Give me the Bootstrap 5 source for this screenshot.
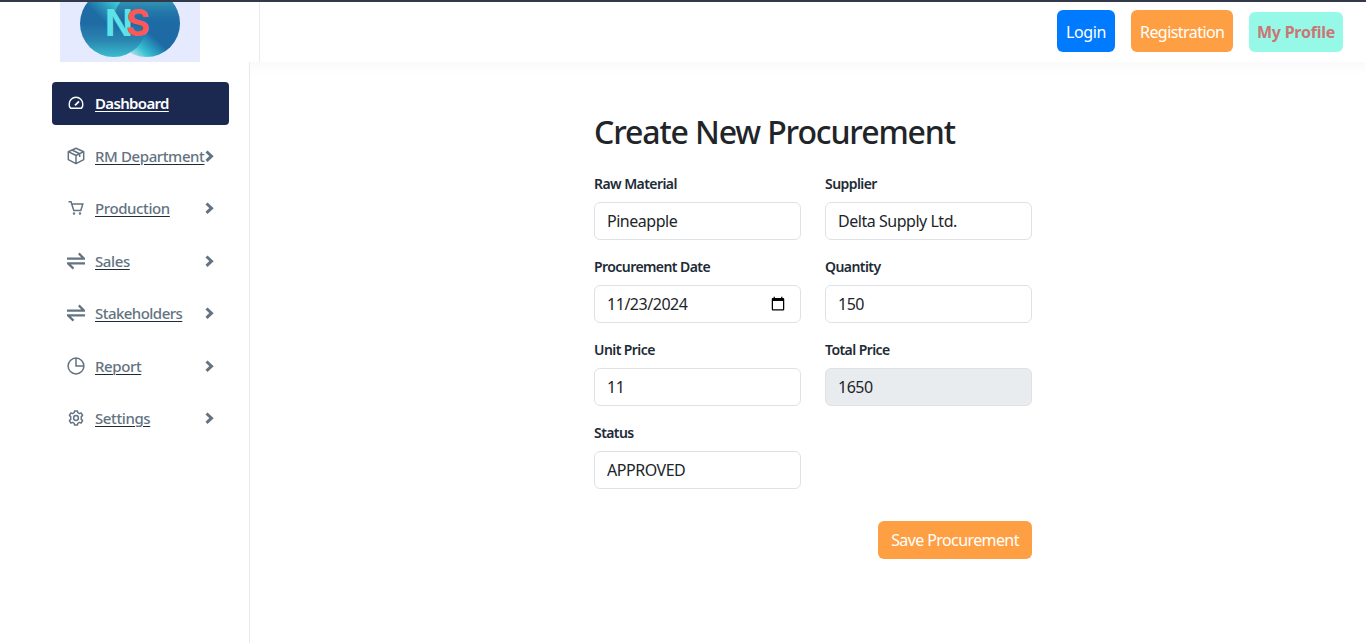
<!DOCTYPE html>
<html lang="en">
<head>
<meta charset="utf-8">
<meta name="viewport" content="width=device-width, initial-scale=1">
<title>Create New Procurement</title>
<link href="https://cdn.jsdelivr.net/npm/bootstrap@5.3.0/dist/css/bootstrap.min.css" rel="stylesheet">
<style>
  body { font-family: "Noto Sans", "Open Sans", sans-serif; color: #212529; height: 643px; overflow: hidden; background: #fff; }
  .topbar { height: 62px; border-top: 2px solid #323a49; box-shadow: 8px 4px 14px rgba(0,0,0,.03); background: #fff; }
  .brand { width: 260px; border-right: 1px solid #e9eaec; padding-left: 60px; }
  .brand svg { display: block; }
  .brand text { font: 700 36.5px Inter, sans-serif; }
  .top-actions { padding: 8px 23px 0 0; }
  .top-btn { height: 42px; padding: 10px 9px 8px; border-radius: 6px; color: #fff; line-height: 24px; font-size: 16px; text-decoration: none; white-space: nowrap; }
  .b-login { background: #007bff; width: 58px; letter-spacing: -.4px; }
  .b-reg { background: #ff9f43; width: 102px; letter-spacing: -.56px; }
  .b-prof { background: #96f9e8; color: #cb7575; width: 94px; height: 40px; margin-top: 2px; padding: 8px; font-weight: 700; letter-spacing: -.24px; }
  .side { width: 250px; height: 581px; border-right: 1px solid #e8e9eb; padding: 20px 20px 0 52px; background: #fff; }
  .side-item { height: 42.5px; margin-bottom: 10px; padding: 0 15px; border-radius: 4px; color: #637381; font-size: 15px; font-weight: 500; text-decoration: none; }
  .side-item span { text-decoration: underline; text-decoration-color: #212b36; text-decoration-thickness: 1px; text-underline-offset: 2px; margin-left: 10px; letter-spacing: -.4px; white-space: nowrap; }
  .side-item.current { background: #1b2850; color: #fff; }
  .side-item.current span { text-decoration-color: #fff; font-weight: 600; letter-spacing: -.66px; }
  .side-item .snug { letter-spacing: -.54px; }
  .side-item svg { flex: none; }
  .side-item .chev { margin: 0 -1px 0 auto; }
  .proc-form { width: 438px; margin-left: 344px; padding-top: 51px; }
  h2 { font-size: 32px; font-weight: 550; line-height: 38px; margin-bottom: 22px; letter-spacing: -1.12px; white-space: nowrap; }
  .form-label { display: block; font-size: 14px; line-height: 21px; font-weight: 600; margin-bottom: 8px; letter-spacing: -.57px; color: #212b36; }
  .form-control { height: 38px; letter-spacing: -.47px; color: #212529; border-color: #dee2e6; font-size: 16px; }
  .form-control[readonly] { background: #e9ecef; }
  .save { width: 154px; height: 38px; background: #ff9f43; color: #fff; padding: 6px 0; letter-spacing: -.6px; border: 0; }
</style>
<script src="https://cdn.jsdelivr.net/npm/bootstrap@5.3.0/dist/js/bootstrap.bundle.min.js"></script>
</head>
<body>
<svg width="0" height="0" class="position-absolute">
  <symbol id="chev" viewBox="0 0 10 14"><path d="M1.500 2.500 6.500 7.200 1.500 11.900" fill="none" stroke="#637381" stroke-width="3"/></symbol>
  <symbol id="swap" viewBox="0 0 18 18"><path d="M0 6.600h17L11.800 1.400M18 11.400H1l5.500 5.200" fill="none" stroke="#637381" stroke-width="2.200"/></symbol>
</svg>
<header class="topbar d-flex justify-content-between">
  <div class="brand">
    <svg width="140" height="60" viewBox="0 2 140 60">
      <defs>
        <linearGradient id="right" x1="66" y1="56" x2="104" y2="14" gradientUnits="userSpaceOnUse"><stop offset="0" stop-color="#e3eff0"/><stop offset=".28" stop-color="#36bfd2"/><stop offset=".58" stop-color="#1d6aa5"/><stop offset="1" stop-color="#1d6aa5"/></linearGradient>
        <linearGradient id="left" x1="0" y1="2" x2="0" y2="57" gradientUnits="userSpaceOnUse"><stop offset=".4" stop-color="#1f6ca5"/><stop offset=".7" stop-color="#2a86b0"/><stop offset="1" stop-color="#3bbccf"/></linearGradient>
        <linearGradient id="glow" x1="36" y1="14" x2="52" y2="-2" gradientUnits="userSpaceOnUse"><stop offset="0" stop-color="#36bfd2" stop-opacity="0"/><stop offset="1" stop-color="#3fc6d3"/></linearGradient>
        <linearGradient id="haze" x1="0" y1="2" x2="0" y2="24" gradientUnits="userSpaceOnUse"><stop offset="0" stop-color="#3192b3"/><stop offset="1" stop-color="#2272a6" stop-opacity="0"/></linearGradient>
        <mask id="outside" maskUnits="userSpaceOnUse" x="0" y="0" width="140" height="62"><rect width="140" height="62" fill="#fff"/><circle cx="86.500" cy="23.500" r="33.500" fill="#000"/></mask>
      </defs>
      <rect width="140" height="62" fill="#e5eaff"/>
      <circle cx="86.500" cy="23.500" r="33.500" fill="url(#right)"/>
      <circle cx="53.500" cy="23.500" r="33.500" fill="url(#left)"/>
      <circle cx="53.500" cy="23.500" r="33.500" fill="url(#glow)" mask="url(#outside)"/>
      <circle cx="86.500" cy="23.500" r="33.500" fill="url(#haze)"/>
      <text x="45" y="36" fill="#5de2e7">N</text>
      <text x="66" y="36" fill="#ff5757">S</text>
    </svg>
  </div>
  <div class="top-actions d-flex align-items-start gap-3">
    <a class="top-btn b-login" href="#">Login</a>
    <a class="top-btn b-reg" href="#">Registration</a>
    <a class="top-btn b-prof" href="#">My Profile</a>
  </div>
</header>
<div class="d-flex">
  <nav class="side d-flex flex-column flex-shrink-0">
    <a class="side-item current d-flex align-items-center" href="#">
      <svg width="18" height="18" viewBox="0 0 18 18" fill="none" stroke="#fff" stroke-width="1.400"><path d="M3.600 14.200A6.700 5.900 0 0 1 2.200 10 6.800 6.800 0 0 1 15.800 10 6.700 5.900 0 0 1 14.400 14.200Z"/><path d="m8 11.300 4-4" stroke-width="1.800"/></svg>
      <span>Dashboard</span></a>
    <a class="side-item d-flex align-items-center" href="#">
      <svg width="18" height="18" viewBox="0 0 18 18" fill="none" stroke="#637381" stroke-width="1.500" stroke-linejoin="round"><path d="M9 1.200 16.700 4.700V12.600L9 16.700 1.300 12.600V4.700ZM1.300 4.700 9 8.500 16.700 4.700M9 8.500V16.700M5 3l7.700 3.700V10"/></svg>
      <span>RM Department</span><svg class="chev" width="10" height="14"><use href="#chev"/></svg></a>
    <a class="side-item d-flex align-items-center" href="#">
      <svg width="18" height="18" viewBox="0 0 18 18" fill="none" stroke="#637381" stroke-width="1.500"><path d="M1.500 2.700H4L6.800 11.500H13.800L15.800 5H4.700"/><circle cx="7" cy="14.500" r=".5"/><circle cx="13" cy="14.500" r=".5"/></svg>
      <span>Production</span><svg class="chev" width="10" height="14"><use href="#chev"/></svg></a>
    <a class="side-item d-flex align-items-center" href="#">
      <svg width="18" height="18"><use href="#swap"/></svg>
      <span>Sales</span><svg class="chev" width="10" height="14"><use href="#chev"/></svg></a>
    <a class="side-item d-flex align-items-center" href="#">
      <svg width="18" height="18"><use href="#swap"/></svg>
      <span class="snug">Stakeholders</span><svg class="chev" width="10" height="14"><use href="#chev"/></svg></a>
    <a class="side-item d-flex align-items-center" href="#">
      <svg width="18" height="18" viewBox="0 0 18 18" fill="none" stroke="#637381" stroke-width="1.500"><circle cx="9" cy="9" r="7.900"/><path d="M9 1V9H17"/></svg>
      <span>Report</span><svg class="chev" width="10" height="14"><use href="#chev"/></svg></a>
    <a class="side-item d-flex align-items-center" href="#">
      <svg width="18" height="18" viewBox="0 0 18 18" fill="none" stroke="#637381" stroke-width="1.500" stroke-linejoin="round"><path d="M7.200 3.700 7.600 2h2.800l.4 1.700 1.600.9 1.700-.7 1.500 2.500-1.300 1.200v2.800l1.300 1.200-1.500 2.500-1.700-.7-1.600.9-.4 1.700H7.600l-.4-1.700-1.600-.9-1.700.7-1.500-2.500 1.300-1.200V7.600L2.400 6.400l1.500-2.500 1.700.7Z"/><circle cx="9" cy="9" r="2.400"/></svg>
      <span>Settings</span><svg class="chev" width="10" height="14"><use href="#chev"/></svg></a>
  </nav>
  <main>
    <form class="proc-form">
      <h2>Create New Procurement</h2>
      <div class="row">
        <div class="col-6 mb-3"><label class="form-label" for="rm">Raw Material</label><input id="rm" class="form-control" value="Pineapple"></div>
        <div class="col-6 mb-3"><label class="form-label" for="sup">Supplier</label><input id="sup" class="form-control" value="Delta Supply Ltd."></div>
        <div class="col-6 mb-3"><label class="form-label" for="dt">Procurement Date</label><input id="dt" type="date" class="form-control" value="2024-11-23"></div>
        <div class="col-6 mb-3"><label class="form-label" for="qty">Quantity</label><input id="qty" class="form-control" value="150"></div>
        <div class="col-6 mb-3"><label class="form-label" for="up">Unit Price</label><input id="up" class="form-control" value="11"></div>
        <div class="col-6 mb-3"><label class="form-label" for="tp">Total Price</label><input id="tp" class="form-control" value="1650" readonly></div>
        <div class="col-6 mb-3"><label class="form-label" for="st">Status</label><input id="st" class="form-control" value="APPROVED"></div>
      </div>
      <div class="d-flex justify-content-end mt-3"><button type="button" class="btn save">Save Procurement</button></div>
    </form>
  </main>
</div>
</body>
</html>
